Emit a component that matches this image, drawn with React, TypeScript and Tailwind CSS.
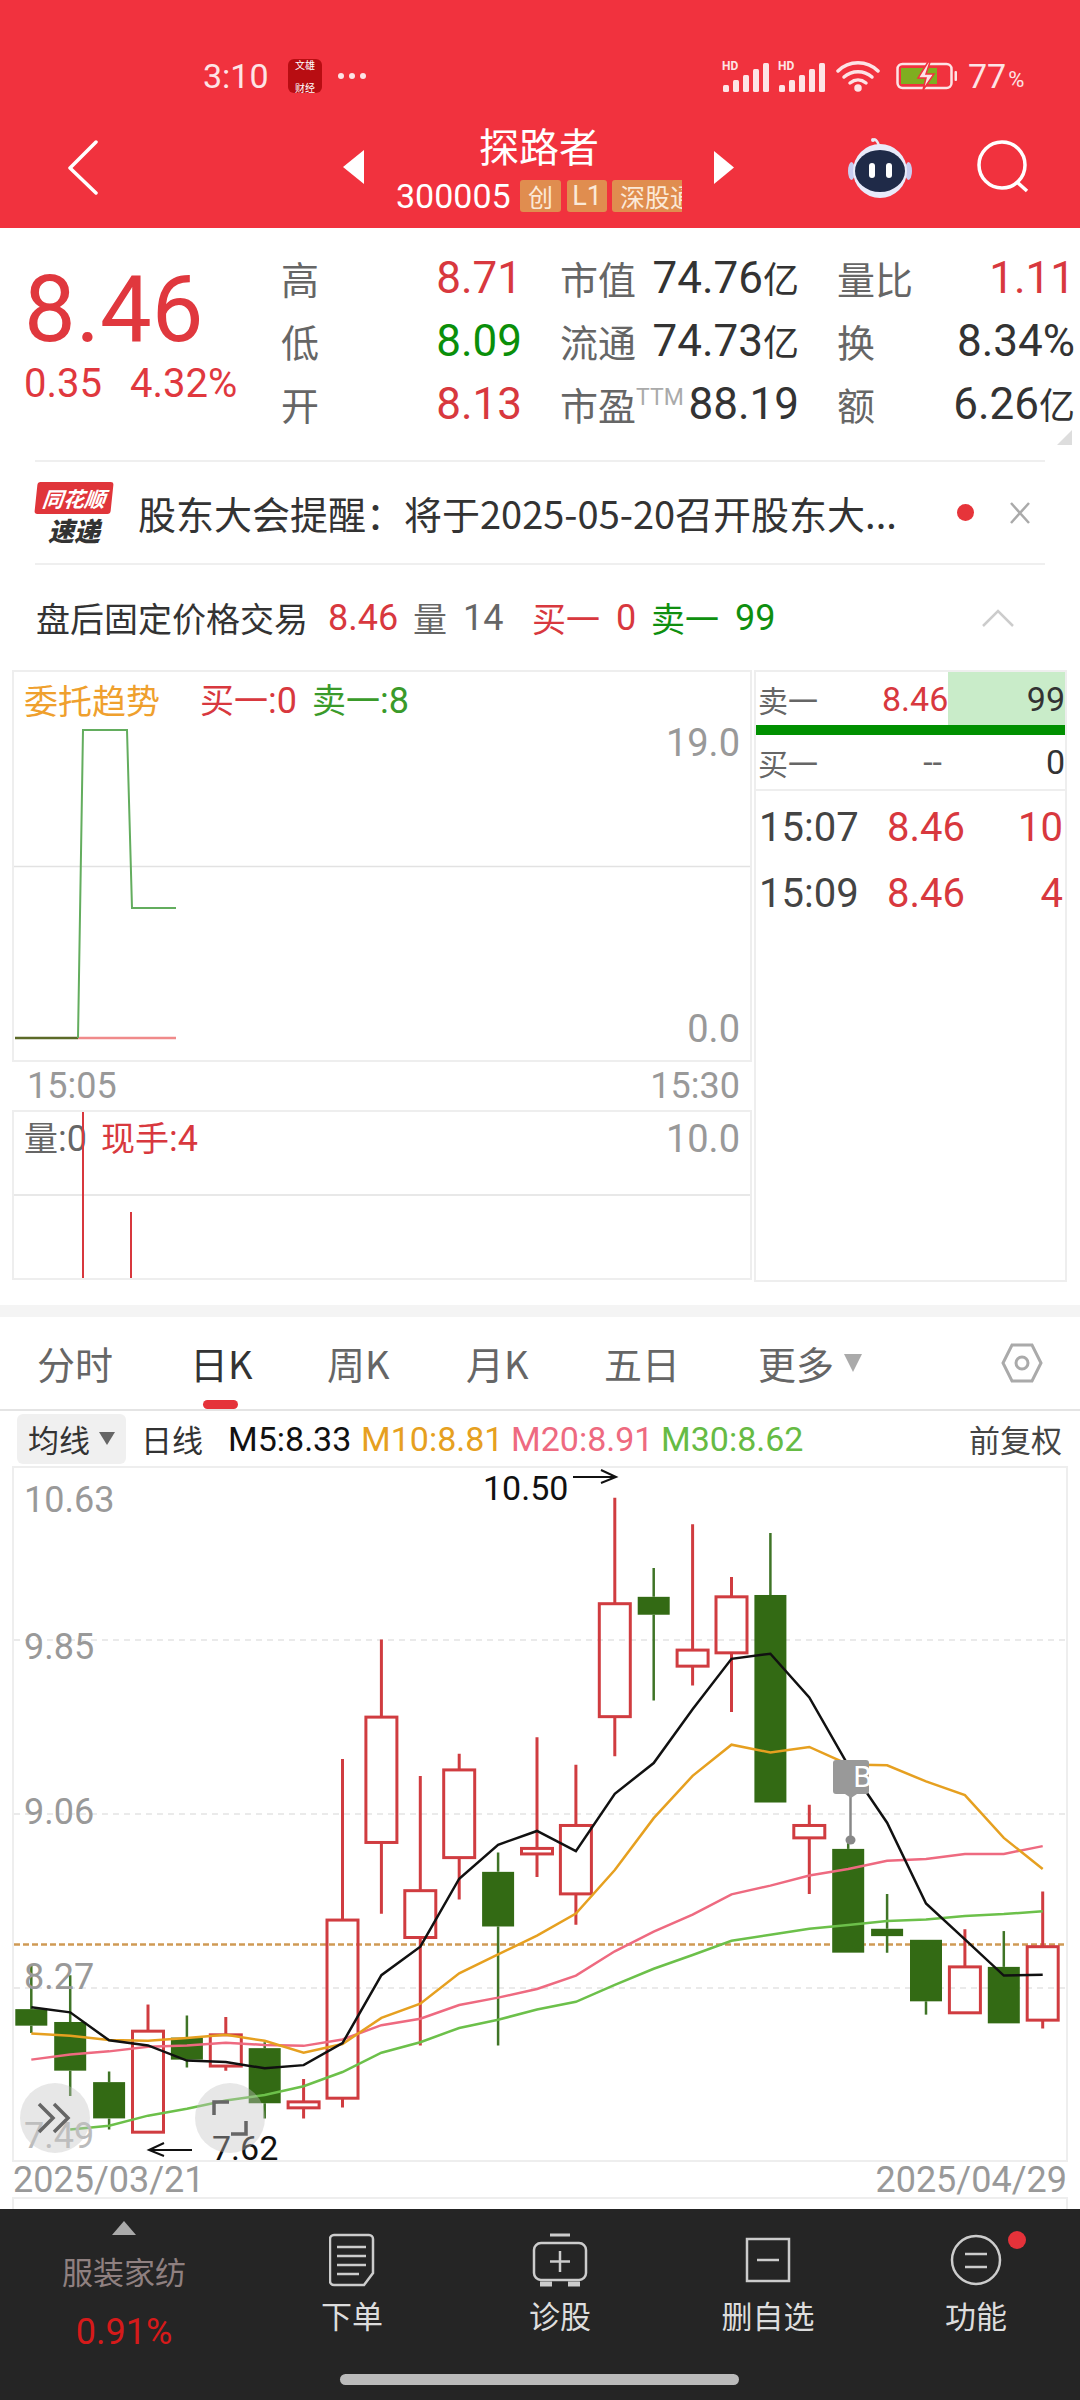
import React from "react";

const NUM = "font-['Liberation_Sans_Narrow','Roboto','Noto_Sans_CJK_SC',sans-serif]";

// chart values were read in picture coordinates, y goes through zy()
const zy = (v: number) => 1460 + v / 2.178;
const cx = (i: number) => 31.3 + 38.9 * i;

type Candle = { up: boolean; wt: number; bt: number; bb: number; wb: number };
const c = (up: boolean, wt: number, bt: number, bb: number, wb: number): Candle => ({ up, wt, bt, bb, wb });

const candles: Candle[] = [
  c(false, 1100, 1196, 1232, 1248),
  c(false, 1122, 1224, 1330, 1385),
  c(false, 1332, 1355, 1434, 1458),
  c(true, 1186, 1244, 1464, 1464),
  c(false, 1210, 1258, 1306, 1323),
  c(true, 1213, 1252, 1320, 1330),
  c(false, 1268, 1281, 1401, 1434),
  c(true, 1348, 1398, 1411, 1434),
  c(true, 651, 1002, 1390, 1410),
  c(true, 391, 560, 833, 988),
  c(true, 688, 938, 1040, 1275),
  c(true, 640, 675, 866, 957),
  c(false, 855, 897, 1016, 1275),
  c(true, 604, 846, 858, 908),
  c(true, 664, 796, 945, 1012),
  c(true, 82, 313, 559, 645),
  c(false, 235, 298, 337, 524),
  c(true, 140, 414, 449, 491),
  c(true, 255, 298, 420, 549),
  c(false, 159, 294, 746, 746),
  c(true, 751, 796, 823, 945),
  c(false, 830, 847, 1073, 1073),
  c(false, 945, 1021, 1037, 1073),
  c(false, 1045, 1045, 1179, 1208),
  c(true, 1022, 1104, 1204, 1204),
  c(false, 1026, 1104, 1227, 1227),
  c(true, 940, 1060, 1220, 1238),
];

const ma5 = [1192, 1203, 1264, 1275, 1308, 1311, 1325, 1318, 1270, 1122, 1060, 912, 838, 808, 852, 727, 660, 543, 433, 422, 517, 665, 790, 966, 1044, 1123, 1121];
const ma10 = [1249, 1254, 1263, 1265, 1259, 1252, 1265, 1291, 1272, 1215, 1184, 1118, 1077, 1036, 988, 893, 780, 688, 620, 637, 625, 663, 665, 700, 730, 823, 891];
const ma20 = [1306, 1295, 1288, 1278, 1275, 1269, 1274, 1276, 1262, 1231, 1217, 1187, 1171, 1152, 1123, 1070, 1027, 990, 946, 927, 905, 891, 873, 869, 858, 858, 841];
const ma30 = [1458, 1450, 1428, 1413, 1395, 1383, 1364, 1333, 1291, 1268, 1237, 1219, 1197, 1180, 1143, 1108, 1078, 1047, 1034, 1021, 1013, 1004, 1001, 993, 989, 983];

const line = (vals: number[], from = 0) => vals.map((v, i) => `${cx(i + from)},${zy(v)}`).join(" ");

function StatusBar() {
  return (
    <div className="flex h-[52px] mt-[50px] items-center pl-[203px] text-[#fde4e6]">
      <span className="text-[34px] leading-none font-['Roboto',sans-serif] w-[70px]">3:10</span>
      <div className="ml-[15px] w-[34px] h-[34px] rounded-[6px] bg-[#b80d12] flex flex-col items-center justify-between text-[10px] leading-[11px] text-white">
        <span>文雄</span>
        <span>财经</span>
      </div>
      <div className="ml-[16px] flex gap-[5px]">
        <span className="w-[6px] h-[6px] rounded-full bg-[#fde4e6]" />
        <span className="w-[6px] h-[6px] rounded-full bg-[#fde4e6]" />
        <span className="w-[6px] h-[6px] rounded-full bg-[#fde4e6]" />
      </div>
      <Signal className="ml-[356px]" />
      <Signal className="ml-[9px]" />
      <svg className="ml-[11px]" width="44" height="32" viewBox="0 0 44 32" fill="none" stroke="#fde4e6" strokeWidth="3.5" strokeLinecap="round">
        <path d="M2 11C13 0 31 0 42 11" />
        <path d="M8 17c8-7 20-7 28 0" />
        <path d="M14 23c5-4 11-4 16 0" />
        <circle cx="22" cy="28" r="2" fill="#fde4e6" />
      </svg>
      <svg className="ml-[16px]" width="62" height="30" viewBox="0 0 62 30" fill="none">
        <rect x="1.5" y="3" width="54" height="24" rx="5" stroke="#fde4e6" strokeWidth="2.5" />
        <rect x="5" y="7" width="36" height="16" fill="#7fae20" />
        <path d="M32 1 22 17h8l-3 12 11-16h-8l4-12z" fill="#fde4e6" stroke="#f1323e" strokeWidth="1.5" />
        <rect x="58.5" y="10" width="2.5" height="10" rx="1" fill="#fde4e6" />
      </svg>
      <span className="ml-[10px] text-[34px] leading-none font-['Roboto',sans-serif]">77</span>
      <span className="ml-[2px] mt-[8px] text-[22px] leading-none font-['Roboto',sans-serif]">%</span>
    </div>
  );
}

function Signal({ className }: { className: string }) {
  return (
    <svg className={className} width="47" height="32" viewBox="0 0 47 32" fill="#fde4e6">
      <text x="0" y="10" fontSize="12" fontFamily="Roboto" fontWeight="700">HD</text>
      <rect x="1" y="25" width="6" height="7" rx="1.5" />
      <rect x="11" y="20" width="6" height="12" rx="1.5" />
      <rect x="21" y="15" width="6" height="17" rx="1.5" />
      <rect x="31" y="9" width="6" height="23" rx="1.5" />
      <rect x="41" y="3" width="6" height="29" rx="1.5" />
    </svg>
  );
}

function Nav() {
  return (
    <div className="flex flex-1 items-center pl-[67px]">
      <svg width="31" height="55" viewBox="0 0 31 55" fill="none" stroke="#fff" strokeWidth="3.5" className="mt-[4px]">
        <path d="M29 2 3 28l26 25" strokeLinecap="round" strokeLinejoin="round" />
      </svg>
      <svg className="ml-[245px] mt-[4px]" width="21" height="34" viewBox="0 0 21 34" fill="#fff">
        <path d="M21 0v34L0 17z" />
      </svg>
      <div className="w-[350px] flex flex-col items-center text-white">
        <span className="text-[40px] leading-[56px] font-['Noto_Sans_CJK_SC',sans-serif]">探路者</span>
        <div className="flex items-center mt-[6px] h-[34px]">
          <span className={`text-[34px] leading-none ${NUM} w-[124px]`}>300005</span>
          <span className="w-[41px] h-[32px] rounded-[3px] bg-[#e08d4f] text-[#fbe9d8] text-[25px] leading-[32px] text-center font-['Noto_Sans_CJK_SC',sans-serif]">创</span>
          <span className={`ml-[6px] w-[40px] h-[32px] rounded-[3px] bg-[#e08d4f] text-[#fbe9d8] text-[27px] leading-[32px] text-center ${NUM}`}>L1</span>
          <span className="ml-[5px] w-[70px] h-[32px] rounded-l-[3px] bg-[#e08d4f] text-[#fbe9d8] text-[25px] leading-[32px] pl-[8px] whitespace-nowrap overflow-hidden font-['Noto_Sans_CJK_SC',sans-serif]">深股通</span>
        </div>
      </div>
      <svg className="mt-[4px]" width="20" height="33" viewBox="0 0 20 33" fill="#fff">
        <path d="M0 0v33l20-16.500z" />
      </svg>
      <svg className="ml-[114px] mt-[6px]" width="64" height="60" viewBox="0 0 64 60">
        <path d="M26 1c3 1 4 3 5 7" fill="none" stroke="#e8eaf6" strokeWidth="2.500" />
        <circle cx="25" cy="2" r="2" fill="#e8eaf6" />
        <ellipse cx="3.500" cy="33" rx="3.500" ry="9" fill="#c9cdf0" />
        <ellipse cx="60.500" cy="33" rx="3.500" ry="9" fill="#c9cdf0" />
        <circle cx="32" cy="33" r="27" fill="#e9ebfa" />
        <ellipse cx="32" cy="33" rx="25" ry="21" fill="#1f2a48" />
        <rect x="21" y="25" width="6" height="15" rx="3" fill="#fff" />
        <rect x="38" y="25" width="6" height="15" rx="3" fill="#fff" />
      </svg>
      <svg className="ml-[65px] mt-[2px]" width="52" height="54" viewBox="0 0 52 54" fill="none" stroke="#fff" strokeWidth="3.500">
        <circle cx="25" cy="26" r="23" />
        <path d="m40 43 10 9" />
      </svg>
    </div>
  );
}

function Stat({ label, value, cls }: { label: React.ReactNode; value: React.ReactNode; cls: string }) {
  return (
    <div className="flex items-center justify-between h-[63px]">
      <span className="text-[38px] leading-none text-[#666]">{label}</span>
      <span className={`text-[44px] leading-none whitespace-nowrap ${NUM} ${cls}`}>{value}</span>
    </div>
  );
}

function Yi({ v }: { v: string }) {
  return (
    <>
      {v}
      <span className="text-[36px] font-['Noto_Sans_CJK_SC',sans-serif]">亿</span>
    </>
  );
}

function Quote() {
  return (
    <div className="relative h-[232px] flex pt-[18px]">
      <div className="w-[281px] pl-[24px] text-[#e0383e]">
        <div className={`text-[92px] leading-[100px] mt-[14px] ${NUM}`}>8.46</div>
        <div className={`flex text-[40px] leading-none mt-[4px] ${NUM}`}>
          <span>0.35</span>
          <span className="ml-[28px]">4.32%</span>
        </div>
      </div>
      <div className="grid grid-cols-[241px_239px_238px] gap-x-[38px] h-[189px]">
        <Stat label="高" value="8.71" cls="text-[#d8383e]" />
        <Stat label="市值" value={<Yi v="74.76" />} cls="text-[#333]" />
        <Stat label="量比" value="1.11" cls="text-[#d8383e]" />
        <Stat label="低" value="8.09" cls="text-[#0a8f0a]" />
        <Stat label="流通" value={<Yi v="74.73" />} cls="text-[#333]" />
        <Stat label="换" value="8.34%" cls="text-[#333]" />
        <Stat label="开" value="8.13" cls="text-[#d8383e]" />
        <Stat
          label={
            <span className="flex">
              市盈
              <span className="text-[23px] leading-[26px] text-[#aaa] font-['Roboto',sans-serif]">TTM</span>
            </span>
          }
          value="88.19"
          cls="text-[#333]"
        />
        <Stat label="额" value={<Yi v="6.26" />} cls="text-[#333]" />
      </div>
      <svg className="absolute right-[8px] top-[202px]" width="15" height="15" viewBox="0 0 15 15" fill="#ddd">
        <path d="M15 0v15H0z" />
      </svg>
    </div>
  );
}

function Notice() {
  return (
    <div className="mx-[35px] h-[105px] border-y-2 border-[#efefef] flex items-center">
      <div className="w-[78px] h-[64px] flex flex-col items-center mt-[2px]">
        <div className="w-[76px] h-[32px] bg-[#e0353a] rounded-[3px] -skew-x-6 text-white text-[21px] leading-[32px] font-bold italic text-center whitespace-nowrap">同花顺</div>
        <div className="text-[#333] text-[26px] leading-[32px] font-black italic whitespace-nowrap">速递</div>
      </div>
      <span className="ml-[25px] w-[820px] whitespace-nowrap text-[#333] text-[38px] leading-none">股东大会提醒：将于2025-05-20召开股东大...</span>
      <span className="-ml-[1px] w-[17px] h-[17px] rounded-full bg-[#e6343a]" />
      <svg className="ml-[35px]" width="22" height="24" viewBox="0 0 22 24" fill="none" stroke="#aaa" strokeWidth="2.500">
        <path d="m2 2 18 20M20 2 2 22" />
      </svg>
    </div>
  );
}

function AfterHours() {
  return (
    <div className="h-[105px] pl-[36px] pr-[65px] flex items-center text-[34px] leading-none">
      <span className="text-[#333] w-[292px]">盘后固定价格交易</span>
      <span className={`text-[#d8383e] text-[36px] w-[85px] ${NUM}`}>8.46</span>
      <span className="text-[#666]">量</span>
      <span className={`text-[#666] text-[36px] ml-[16px] w-[69px] ${NUM}`}>14</span>
      <span className="text-[#d8383e]">买一</span>
      <span className={`text-[#d8383e] text-[36px] ml-[16px] w-[19px] ${NUM}`}>0</span>
      <span className="ml-[16px] text-[#0f8f0f]">卖一</span>
      <span className={`text-[#0f8f0f] text-[36px] ml-[16px] ${NUM}`}>99</span>
      <svg className="ml-auto" width="34" height="18" viewBox="0 0 34 18" fill="none" stroke="#ccc" strokeWidth="2.500">
        <path d="m2 17 15-15 15 15" />
      </svg>
    </div>
  );
}

function Trend() {
  return (
    <div className="flex px-[12px] gap-[2px]">
      <div className="w-[740px]">
        <div className="relative h-[392px] border-2 border-[#eee]">
          <div className="flex items-center h-[56px] pl-[10px] text-[34px] leading-none">
            <span className="text-[#efa02d] w-[176px]">委托趋势</span>
            <span className="text-[#d8383e] w-[112px] whitespace-nowrap">买一<span className={`text-[36px] ${NUM}`}>:0</span></span>
            <span className="text-[#3a9a2a] whitespace-nowrap">卖一<span className={`text-[36px] ${NUM}`}>:8</span></span>
          </div>
          <svg className="absolute left-0 top-0" width="736" height="388" viewBox="14 672 736 388" fill="none">
            <path d="M14 866.500h736" stroke="#e2e2e2" strokeWidth="1.500" />
            <path d="M78 1038h98" stroke="#f08a8a" strokeWidth="2.500" />
            <path d="M15 1038h63" stroke="#5c6a28" strokeWidth="2.500" />
            <path d="M78 1038 83 730h44l5 178h44" stroke="#63ad5e" strokeWidth="2" />
          </svg>
          <span className={`absolute right-[10px] top-[52px] text-[38px] leading-none text-[#999] ${NUM}`}>19.0</span>
          <span className={`absolute right-[10px] top-[338px] text-[38px] leading-none text-[#999] ${NUM}`}>0.0</span>
        </div>
        <div className={`h-[48px] flex justify-between items-center pl-[15px] pr-[12px] text-[36px] leading-none text-[#999] ${NUM}`}>
          <span>15:05</span>
          <span>15:30</span>
        </div>
        <div className="relative h-[170px] border-2 border-[#eee]">
          <div className="flex items-center h-[52px] pl-[10px] text-[34px] leading-none">
            <span className="text-[#666] w-[77px] whitespace-nowrap">量<span className={`text-[36px] ${NUM}`}>:0</span></span>
            <span className="text-[#d8383e] whitespace-nowrap">现手<span className={`text-[36px] ${NUM}`}>:4</span></span>
          </div>
          <svg className="absolute left-0 top-0" width="736" height="166" viewBox="14 1112 736 166" fill="none">
            <path d="M14 1195h736" stroke="#e8e8e8" strokeWidth="2" />
            <path d="M83 1112v166M131 1212v66" stroke="#d8383e" strokeWidth="2" />
          </svg>
          <span className={`absolute right-[10px] top-[8px] text-[38px] leading-none text-[#999] ${NUM}`}>10.0</span>
        </div>
      </div>
      <div className="w-[313px] h-[612px] border-2 border-[#eee]">
        <div className="relative h-[53px] flex items-center pl-[2px] text-[30px] leading-none text-[#666]">
          <div className="absolute right-0 top-0 bottom-0 w-[117px] bg-[#c9ecc9]" />
          <span className="w-[124px]">卖一</span>
          <span className={`relative w-[60px] text-right text-[#d8383e] text-[34px] ${NUM}`}>8.46</span>
          <span className={`relative w-[123px] text-right text-[#333] text-[34px] ${NUM}`}>99</span>
        </div>
        <div className="h-[10px] bg-[#009000]" />
        <div className="h-[56px] flex items-center pl-[2px] text-[30px] leading-none text-[#666] border-b-2 border-[#eee]">
          <span className="w-[124px]">买一</span>
          <span className={`w-[60px] text-right text-[#666] text-[34px] ${NUM}`}>--</span>
          <span className={`w-[123px] text-right text-[#333] text-[34px] ${NUM}`}>0</span>
        </div>
        <div className="h-[66px] mt-[4px] flex items-center pl-[3px] pr-[2px]">
          <span className={`w-[128px] text-[40px] leading-none text-[#444] ${NUM}`}>15:07</span>
          <span className={`w-[72px] text-[40px] leading-none text-[#d8383e] ${NUM}`}>8.46</span>
          <span className={`flex-1 text-right text-[40px] leading-none text-[#d8383e] ${NUM}`}>10</span>
        </div>
        <div className="h-[66px] flex items-center pl-[3px] pr-[2px]">
          <span className={`w-[128px] text-[40px] leading-none text-[#444] ${NUM}`}>15:09</span>
          <span className={`w-[72px] text-[40px] leading-none text-[#d8383e] ${NUM}`}>8.46</span>
          <span className={`flex-1 text-right text-[40px] leading-none text-[#d8383e] ${NUM}`}>4</span>
        </div>
      </div>
    </div>
  );
}

const tabs = [
  { t: "分时", w: "w-[153px]", cls: "text-[#666]" },
  { t: "日K", w: "w-[137px]", cls: "text-[#333]" },
  { t: "周K", w: "w-[139px]", cls: "text-[#666]" },
  { t: "月K", w: "w-[138px]", cls: "text-[#666]" },
  { t: "五日", w: "w-[154px]", cls: "text-[#666]" },
];

function Tabs() {
  return (
    <div className="h-[94px] border-b-2 border-[#e4e4e4] flex items-center pl-[37px] text-[38px] leading-none">
      {tabs.map((tab, i) => (
        <div key={tab.t} className={`relative ${tab.w} ${tab.cls}`}>
          {tab.t}
          {i === 1 && <div className="absolute left-[13px] top-[56px] w-[35px] h-[9px] rounded-full bg-[#e5323a]" />}
        </div>
      ))}
      <span className="text-[#666]">更多</span>
      <svg className="ml-[10px]" width="18" height="18" viewBox="0 0 18 18" fill="#aaa">
        <path d="M0 0h18L9 18z" />
      </svg>
      <svg className="ml-[139px]" width="42" height="40" viewBox="0 0 42 40" fill="none" stroke="#aaa" strokeWidth="3">
        <path d="M11 2h20l9 18-9 18H11L2 20z" />
        <circle cx="21" cy="20" r="6" />
      </svg>
    </div>
  );
}

function MaRow() {
  return (
    <div className="h-[55px] flex items-center pl-[17px] pr-[18px] text-[31px] leading-none">
      <div className="w-[109px] h-[50px] rounded-[6px] bg-[#f0f0f0] flex items-center pl-[11px] text-[#333]">
        均线
        <svg className="ml-[9px]" width="16" height="13" viewBox="0 0 16 13" fill="#666">
          <path d="M0 0h16L8 13z" />
        </svg>
      </div>
      <span className="ml-[15px] text-[#333]">日线</span>
      <span className={`ml-[25px] w-[133px] text-[34px] text-[#111] ${NUM}`}>M5:8.33</span>
      <span className={`w-[150px] text-[34px] text-[#e6a020] ${NUM}`}>M10:8.81</span>
      <span className={`w-[150px] text-[34px] text-[#ee6a80] ${NUM}`}>M20:8.91</span>
      <span className={`text-[34px] text-[#66bb44] ${NUM}`}>M30:8.62</span>
      <span className="ml-auto text-[#444]">前复权</span>
    </div>
  );
}

function KChart() {
  return (
    <div className="relative mx-[12px] h-[696px] border-2 border-[#eee]">
      <svg width="1052" height="692" viewBox="14 1468 1052 692" fill="none">
        {[392, 771, 1150].map((v) => (
          <path key={v} d={`M14 ${zy(v)}H1066`} stroke="#e4e4e4" strokeWidth="1.500" strokeDasharray="6 5" />
        ))}
        <path d={`M14 ${zy(1055)}H1065`} stroke="#cf9a55" strokeWidth="2.500" strokeDasharray="6 3" />
        {candles.map((k, i) => {
          const x = cx(i);
          const color = k.up ? "#d03c40" : "#3f7426";
          return (
            <g key={i}>
              <path d={`M${x} ${zy(k.wt)}V${zy(k.bt)}M${x} ${zy(k.bb)}V${zy(k.wb)}`} stroke={color} strokeWidth={k.up ? 3 : 2.5} />
              {k.up ? (
                <rect x={x - 15.500} y={zy(k.bt)} width="31" height={zy(k.bb) - zy(k.bt)} fill="#fff" fillOpacity="0" stroke={color} strokeWidth="3" />
              ) : (
                <rect x={x - 16} y={zy(k.bt)} width="32" height={zy(k.bb) - zy(k.bt)} fill="#336a14" />
              )}
            </g>
          );
        })}
        <polyline points={line(ma30, 1)} stroke="#6cc04a" strokeWidth="2.500" />
        <polyline points={line(ma20)} stroke="#ee6a80" strokeWidth="2.500" />
        <polyline points={line(ma10)} stroke="#e6a020" strokeWidth="2.500" />
        <polyline points={line(ma5)} stroke="#111" strokeWidth="2.500" />
        <path d="M573 1477h43m-15-7 15 7-15 6" stroke="#111" strokeWidth="2" />
        <path d="M192 2150h-43m15-7-15 7 15 6" stroke="#111" strokeWidth="2" />
        <path d="M850.500 1790v50" stroke="#888" strokeWidth="2.500" />
        <ellipse cx="850.500" cy="1840" rx="5" ry="4.500" fill="#888" />
        <path d="M836 1760h30a3 3 0 0 1 3 3v28a3 3 0 0 1-3 3h-9l-6 4-6-4h-9a3 3 0 0 1-3-3v-28a3 3 0 0 1 3-3z" fill="#999" />
      </svg>
      <span className="absolute left-[831px] top-[294px] w-[35px] text-center text-white text-[30px] leading-none font-['Roboto',sans-serif]">B</span>
      <span className={`absolute left-[10px] top-[14px] text-[36px] leading-none text-[#999] ${NUM}`}>10.63</span>
      <span className={`absolute left-[10px] top-[161px] text-[36px] leading-none text-[#999] ${NUM}`}>9.85</span>
      <span className={`absolute left-[10px] top-[326px] text-[36px] leading-none text-[#999] ${NUM}`}>9.06</span>
      <span className={`absolute left-[10px] top-[491px] text-[36px] leading-none text-[#999] ${NUM}`}>8.27</span>
      <span className={`absolute left-[10px] top-[650px] text-[36px] leading-none text-[#bbb] ${NUM}`}>7.49</span>
      <span className={`absolute left-[469px] top-[3px] text-[34px] leading-none text-[#111] ${NUM}`}>10.50</span>
      <span className={`absolute left-[198px] top-[663px] text-[34px] leading-none text-[#111] ${NUM}`}>7.62</span>
      <div className="absolute left-[6px] top-[615px] w-[70px] h-[70px] rounded-full bg-[#c4c4c4]/40 flex items-center justify-center">
        <svg width="36" height="32" viewBox="0 0 36 32" fill="none" stroke="#666" strokeWidth="3.500">
          <path d="m2 2 14 14L2 30M17 2l14 14-14 14" />
        </svg>
      </div>
      <div className="absolute left-[181px] top-[615px] w-[70px] h-[70px] rounded-full bg-[#c4c4c4]/40 flex items-center justify-center">
        <svg width="36" height="36" viewBox="0 0 36 36" fill="none" stroke="#666" strokeWidth="3.500">
          <path d="M2 15V2h15M34 21v13H19" />
        </svg>
      </div>
    </div>
  );
}

function BottomBar() {
  return (
    <div className="h-[191px] bg-[#252525] flex flex-col">
      <div className="h-[165px] flex">
        <div className="w-[248px] flex flex-col items-center pt-[12px]">
          <svg width="24" height="14" viewBox="0 0 24 14" fill="#aaa">
            <path d="M12 0l12 14H0z" />
          </svg>
          <span className="mt-[20px] text-[31px] leading-none text-[#8f8080]">服装家纺</span>
          <span className={`mt-[28px] text-[36px] leading-none text-[#d61a1a] ${NUM}`}>0.91%</span>
        </div>
        <NavItem label="下单">
          <svg width="46" height="54" viewBox="0 0 46 54" fill="none" stroke="#ccc" strokeWidth="2.500">
            <path d="M5 2h35a4 4 0 0 1 4 4v34l-9 12H5a4 4 0 0 1-4-4V6a4 4 0 0 1 4-4z" />
            <path d="M8 14h29M8 23h29M8 32h29M8 41h22" />
          </svg>
        </NavItem>
        <NavItem label="诊股">
          <svg width="56" height="54" viewBox="0 0 56 54" fill="none" stroke="#ccc" strokeWidth="2.500">
            <path d="M18 2h20" strokeWidth="3" />
            <rect x="2" y="10" width="52" height="37" rx="7" />
            <path d="M28 18v21M18 28.500h20" />
            <path d="M8 51h12M36 51h12" strokeWidth="5" />
          </svg>
        </NavItem>
        <NavItem label="删自选">
          <svg width="46" height="46" viewBox="0 0 46 46" fill="none" stroke="#ccc" strokeWidth="2.500">
            <rect x="2" y="2" width="42" height="42" />
            <path d="M12 23h22" />
          </svg>
        </NavItem>
        <NavItem label="功能" dot>
          <svg width="52" height="52" viewBox="0 0 52 52" fill="none" stroke="#ccc" strokeWidth="2.500">
            <circle cx="26" cy="26" r="24" />
            <path d="M15 20h22M15 33h22" />
          </svg>
        </NavItem>
      </div>
      <div className="w-[399px] h-[11px] ml-[340px] rounded-full bg-[#bbb]" />
    </div>
  );
}

function NavItem({ label, dot, children }: { label: string; dot?: boolean; children: React.ReactNode }) {
  return (
    <div className="relative w-[208px] flex flex-col items-center pt-[22px]">
      <div className="h-[58px] flex items-center justify-center">{children}</div>
      {dot && <span className="absolute left-[136px] top-[22px] w-[18px] h-[18px] rounded-full bg-[#e5323a]" />}
      <span className="mt-[10px] text-[31px] leading-none text-[#ddd] whitespace-nowrap">{label}</span>
    </div>
  );
}

export default function App() {
  return (
    <div className="w-[1080px] h-[2400px] bg-white overflow-hidden font-['Noto_Sans_CJK_SC',sans-serif]">
      <div className="h-[228px] bg-[#f1323e] flex flex-col">
        <StatusBar />
        <Nav />
      </div>
      <Quote />
      <Notice />
      <AfterHours />
      <Trend />
      <div className="h-[12px] mt-[23px] bg-[#f4f4f4]" />
      <Tabs />
      <MaRow />
      <KChart />
      <div className={`h-[35px] flex justify-between items-center px-[13px] text-[36px] leading-none text-[#999] ${NUM}`}>
        <span>2025/03/21</span>
        <span>2025/04/29</span>
      </div>
      <div className="mx-[12px] h-[12px] border-2 border-b-0 border-[#eee]" />
      <BottomBar />
    </div>
  );
}
